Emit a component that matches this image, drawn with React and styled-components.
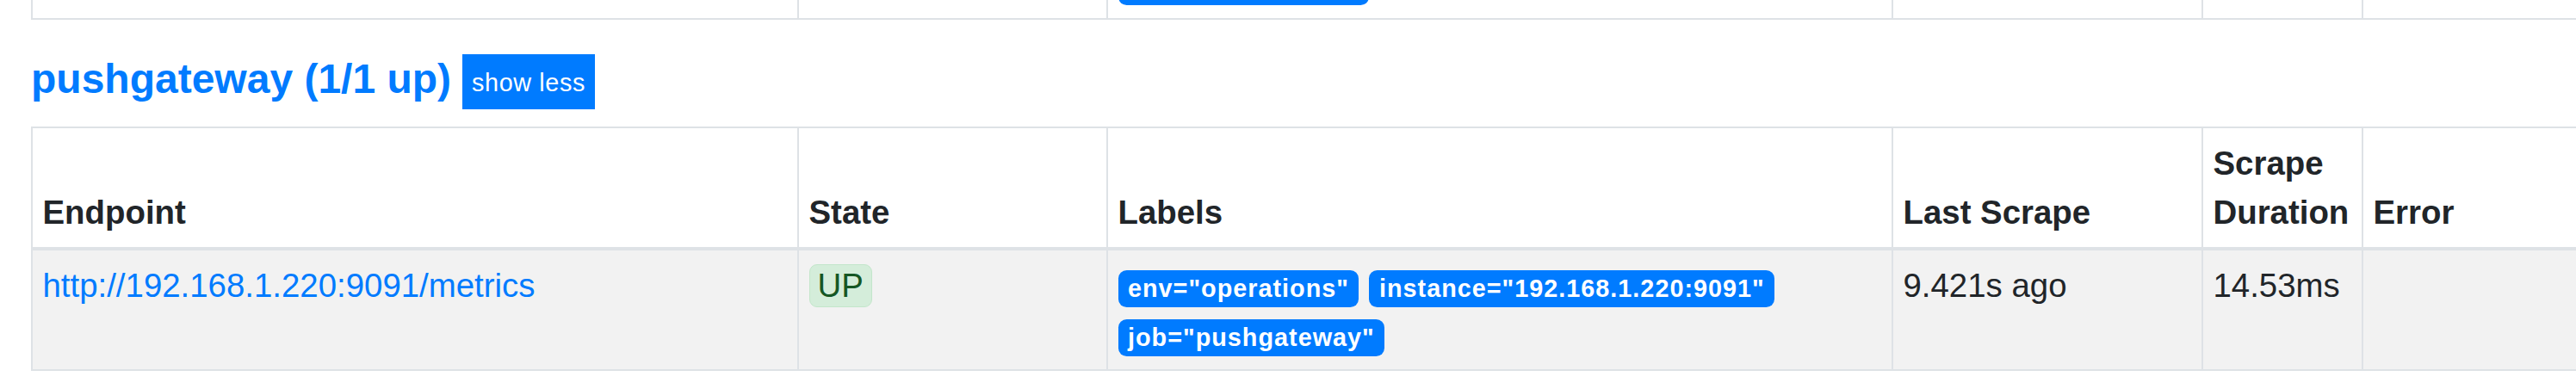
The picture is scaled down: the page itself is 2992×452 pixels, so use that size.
import React from "react";
import styled, { createGlobalStyle } from "styled-components";

const GlobalStyle = createGlobalStyle`
  html, body {
    margin: 0;
    padding: 0;
    background: #fff;
    overflow: hidden;
  }
  body {
    font-family: "Liberation Sans", Arial, Helvetica, sans-serif;
    font-size: 38.4px;
    line-height: 57.6px;
    color: #212529;
  }
`;

// column widths taken from the table grid lines
const COLUMNS = "890px 359px 912px 360px 186px 320px";

const Page = styled.div`
  padding-left: 36px;
  width: 3100px;
`;

const PrevClip = styled.div`
  height: 23px;
  overflow: hidden;
  display: flex;
  flex-direction: column;
  justify-content: flex-end;
`;

const TableGrid = styled.div`
  display: grid;
  grid-template-columns: ${COLUMNS};
`;

const HeadCell = styled.div`
  box-sizing: border-box;
  min-width: 0;
  padding: 11.5px;
  border-left: 2px solid #dee2e6;
  border-top: 2px solid #dee2e6;
  border-bottom: 4px solid #dee2e6;
  font-weight: 700;
  display: flex;
  flex-direction: column;
  justify-content: flex-end;
`;

const Cell = styled.div`
  box-sizing: border-box;
  min-width: 0;
  padding: 11.5px;
  border-left: 2px solid #dee2e6;
  border-bottom: 2px solid #dee2e6;
  background: ${(p) => (p.$striped ? "#f2f2f2" : "#fff")};
`;

const PoolHeader = styled.div`
  display: flex;
  align-items: flex-start;
  margin: 40px 0 20px;
`;

const PoolLink = styled.a`
  font-size: 48px;
  line-height: 57.6px;
  font-weight: 700;
  color: #007bff;
  text-decoration: none;
`;

const ToggleButton = styled.button`
  margin-left: 13px;
  height: 64px;
  padding: 2px 11px 0;
  line-height: 62px;
  font-family: inherit;
  font-size: 28.8px;
  letter-spacing: 0.6px;
  color: #fff;
  background: #007bff;
  border: 0;
  border-radius: 0;
`;

const EndpointLink = styled.a`
  color: #007bff;
  text-decoration: none;
`;

const Health = styled.span`
  display: inline-block;
  padding: 5px 9px;
  font-size: 38.4px;
  line-height: 38px;
  color: #155724;
  background: #d4edda;
  border: 1.5px solid #c3e6cb;
  border-radius: 9px;
`;

const Badge = styled.span`
  display: inline-block;
  margin-right: 12px;
  padding: 7.2px 11.5px;
  font-size: 28.8px;
  font-weight: 700;
  line-height: 1;
  letter-spacing: 1px;
  white-space: nowrap;
  color: #fff;
  background: #007bff;
  border-radius: 9.6px;
`;

const headers = ["Endpoint", "State", "Labels", "Last Scrape", "Scrape Duration", "Error"];

const target = {
  endpoint: "http://192.168.1.220:9091/metrics",
  health: "UP",
  labels: ['env="operations"', 'instance="192.168.1.220:9091"', 'job="pushgateway"'],
  lastScrape: "9.421s ago",
  duration: "14.53ms",
  error: "",
};

const App = () => {
  return (
    <Page>
      <GlobalStyle />
      <PrevClip>
        <TableGrid>
          <Cell />
          <Cell />
          <Cell>
            <Badge>job="prometheus"</Badge>
          </Cell>
          <Cell />
          <Cell />
          <Cell />
        </TableGrid>
      </PrevClip>

      <PoolHeader>
        <PoolLink href="#pushgateway">pushgateway (1/1 up)</PoolLink>
        <ToggleButton>show less</ToggleButton>
      </PoolHeader>

      <TableGrid>
        {headers.map((h) => (
          <HeadCell key={h}>{h}</HeadCell>
        ))}
        <Cell $striped>
          <EndpointLink href={target.endpoint}>{target.endpoint}</EndpointLink>
        </Cell>
        <Cell $striped>
          <Health>{target.health}</Health>
        </Cell>
        <Cell $striped>
          {target.labels.map((l) => (
            <Badge key={l}>{l}</Badge>
          ))}
        </Cell>
        <Cell $striped>{target.lastScrape}</Cell>
        <Cell $striped>{target.duration}</Cell>
        <Cell $striped>{target.error}</Cell>
      </TableGrid>
    </Page>
  );
};

export default App;
